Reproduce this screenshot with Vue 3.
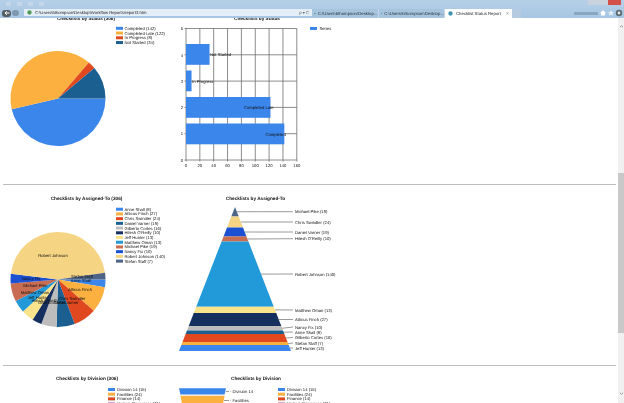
<script setup>
const C = {
  blue: '#3b86ea', orange: '#fbb040', red: '#e0481f', teal: '#1a5f8f', gray: '#bdbdbd', navy: '#15305f',
  pale: '#fbe38c', sky: '#2299d8', brick: '#c86c52', royal: '#1b50d2', sand: '#f5d484', slate: '#4d6487'
}
const sector = (cx, cy, r, a, b) => {
  const p = d => [cx + r * Math.cos(d * Math.PI / 180), cy + r * Math.sin(d * Math.PI / 180)].map(n => n.toFixed(2)).join(' ')
  return `M${cx} ${cy}L${p(a)}A${r} ${r} 0 ${b - a > 180 ? 1 : 0} 1 ${p(b)}Z`
}
const pie = (cx, cy, r, rows) => {
  const total = rows.reduce((s, x) => s + x.v, 0)
  let a = 0
  return rows.map(x => {
    const b = a + x.v / total * 360
    const d = sector(cx, cy, r, a, b)
    a = b
    return { d, c: x.c }
  })
}
const statusRows = [
  { n: 'Completed', v: 142, c: C.blue }, { n: 'Completed Late', v: 122, c: C.orange },
  { n: 'In Progress', v: 8, c: C.red }, { n: 'Not Started', v: 34, c: C.teal }
]
const statusPie = pie(58, 98.5, 47.5, statusRows)
const statusLegend = statusRows.map((r, i) => ({ t: `${r.n} (${r.v})`, c: r.c, y: 28.3 + i * 4.75 }))

const xTicks = [0, 20, 40, 60, 80, 100, 120, 140, 160].map(v => ({ v, x: 186 + v * 0.6925 }))
const yTicks = [0, 1, 2, 3, 4, 5].map(v => ({ v, y: 160 - v * 26.3 }))
const bars = [
  { t: 'Not Started', v: 34, y: 44, lx: 210 },
  { t: 'In Progress', v: 8, y: 70.5, lx: 192 },
  { t: 'Completed Late', v: 122, y: 97, lx: 244 },
  { t: 'Completed', v: 142, y: 123.5, lx: 265.5 }
].map(b => ({ ...b, w: b.v * 0.6925 }))

const people = [
  { n: 'Anne Shall', v: 8, c: C.blue }, { n: 'Atticus Finch', v: 27, c: C.orange }, { n: 'Chris Swindler', v: 24, c: C.red },
  { n: 'Daniel Varner', v: 19, c: C.teal }, { n: 'Gilberto Cortes', v: 16, c: C.gray }, { n: "Hilesh O'Reilly", v: 10, c: C.navy },
  { n: 'Jeff Hunter', v: 13, c: C.pale }, { n: 'Matthew Oman', v: 13, c: C.sky }, { n: 'Michael Pike', v: 19, c: C.brick },
  { n: 'Nancy Fix', v: 10, c: C.royal }, { n: 'Robert Johnson', v: 140, c: C.sand }, { n: 'Stefan Staff', v: 7, c: C.slate }
]
const peoplePie = pie(58, 279.5, 47.5, people)
const peopleLegend = people.map((r, i) => ({ t: `${r.n} (${r.v})`, c: r.c, y: 209.2 + i * 4.72 }))
const pieLabels = [
  ['Robert Johnson', 53, 257], ['Stefan Staff', 82, 278], ['Anne Shall', 81, 282], ['Atticus Finch', 80, 290.5],
  ['Chris Swindler', 72, 300], ['Daniel Varner', 66, 303.5], ['Nancy Fix', 31, 280], ['Michael Pike', 35, 286.5],
  ['Matthew Oman', 35, 294], ['Jeff Hunter', 38, 298.5], ['Hilesh O\'Reilly', 45, 301.5], ['Gilberto Cortes', 52, 303.5]
].map(([t, x, y]) => ({ t, x, y }))

const hw = y => 56 * (y - 207) / 144
const funnelSegs = [
  [207, 216.5, C.slate, 'Michael Pike (19)', 211.7], [216.5, 227.5, C.sand, 'Chris Swindler (24)', 222],
  [227.5, 236.5, C.royal, 'Daniel Varner (19)', 232], [236.5, 241.5, C.brick, "Hilesh O'Reilly (10)", 238.7],
  [241.5, 306.7, C.sky, 'Robert Johnson (140)', 274], [306.7, 313, C.pale, 'Matthew Oman (13)', 310],
  [313, 326, C.navy, 'Atticus Finch (27)', 319.5], [326, 330.5, C.gray, 'Nancy Fix (10)', 327],
  [330.5, 334, C.teal, 'Anne Shall (8)', 332], [334, 342, C.red, 'Gilberto Cortes (16)', 337.5],
  [342, 345, C.orange, 'Stefan Staff (7)', 343], [345, 351, C.blue, 'Jeff Hunter (13)', 348]
].map(([a, b, c, t, ly]) => {
  const mid = (a + b) / 2
  return {
    c, t, ly,
    pts: `${235 - hw(a)},${a} ${235 + hw(a)},${a} ${235 + hw(b)},${b} ${235 - hw(b)},${b}`,
    lx: 235 + hw(mid),
    my: mid
  }
})

const divisionLegend = [
  { t: 'Division 14 (15)', c: C.blue }, { t: 'Facilities (24)', c: C.orange },
  { t: 'Finance (14)', c: C.red }, { t: 'Human Resources (21)', c: '#c9a0c8' }
]
const divLegendA = divisionLegend.map((r, i) => ({ ...r, y: 389.5 + i * 4.7 }))
const divSegs = [
  { pts: '179,388.3 226,388.3 224.6,394.5 180.4,394.5', c: C.blue, t: 'Division 14', y: 391.5, x: 226 },
  { pts: '180.4,395.8 224.6,395.8 223,404 182,404', c: C.orange, t: 'Facilities', y: 400.5, x: 224 }
]
const tabs = ['C:\\Users\\bthompson\\Desktop...', 'C:\\Users\\bthompson\\Desktop...']
</script>

<template>
  <div class="window">
    <header class="chrome">
      <div class="topbar">
        <div class="faint-icons"><i></i><i></i><i></i><i></i></div>
        <div class="caps"><i class="cap"></i><i class="cap"></i><i class="cap close"></i></div>
      </div>
      <div class="toolbar">
        <div class="nav">
          <span class="back">
            <svg viewBox="0 0 8 8" width="8" height="8"><path d="M6.5 4H2M3.8 2.2 2 4l1.8 1.8" fill="none" stroke="#fff" stroke-width="1"/></svg>
          </span>
          <span class="fwd"></span>
        </div>
        <div class="address">
          <svg class="ie" viewBox="0 0 6 6" width="5" height="5"><circle cx="3" cy="3" r="2.6" fill="#4f9a5a"/></svg>
          <span class="url">C:\Users\bthompson\Desktop\Workflow Reports\report3.htm</span>
          <span class="search">ρ ▾ Ċ</span>
        </div>
        <div v-for="(t, i) in tabs" :key="i" class="tab">
          <svg viewBox="0 0 6 6" width="5" height="5"><circle cx="3" cy="3" r="2.6" fill="#4f9a8a"/></svg>
          <span>{{ t }}</span>
        </div>
        <div class="tab active">
          <svg viewBox="0 0 6 6" width="5" height="5"><circle cx="3" cy="3" r="2.6" fill="#3d94b0"/></svg>
          <span class="tab-title">Checklist Status Report</span>
          <span class="tab-x">×</span>
        </div>
        <div class="newtab"></div>
        <div class="tools">
          <i class="blur-name"></i>
          <svg viewBox="0 0 24 8" width="24" height="8">
            <path d="M1 4 4 1.2 7 4M2 4v2.6h4V4" fill="#fff"/>
            <path d="m12 1 .9 2 2.1.2-1.6 1.4.5 2.1-1.9-1.1-1.9 1.1.5-2.1L9 3.200l2.100-.2z" fill="#e8f0f6"/>
            <circle cx="20" cy="4" r="3.200" fill="#5a6a70"/><circle cx="20" cy="4" r="1.400" fill="#dfe8ee"/>
          </svg>
        </div>
      </div>
    </header>

    <div class="page">
      <main class="report">
        <section class="row first">
          <svg class="pane left" viewBox="0 18 170 166">
            <text class="title" x="86" y="19.500" text-anchor="middle">Checklists by Status (306)</text>
            <path v-for="(s, i) in statusPie" :key="i" :d="s.d" :fill="s.c" />
            <g v-for="l in statusLegend" :key="l.t">
              <rect x="116" :y="l.y - 1.500" width="7" height="3" :fill="l.c" />
              <text class="small" x="124.500" :y="l.y + 1.500">{{ l.t }}</text>
            </g>
          </svg>
          <svg class="pane right" viewBox="170 18 448 166">
            <text class="title" x="257" y="19.500" text-anchor="middle">Checklists by Status</text>
            <line v-for="t in xTicks" :key="'x' + t.v" :x1="t.x" y1="28.300" :x2="t.x" y2="161.500" class="grid" />
            <line v-for="t in yTicks" :key="'y' + t.v" x1="184.500" :y1="t.y" x2="296.800" :y2="t.y" class="grid" />
            <text v-for="t in xTicks" :key="'xl' + t.v" class="small" :x="t.x" y="166.500" text-anchor="middle">{{ t.v }}</text>
            <text v-for="t in yTicks" :key="'yl' + t.v" class="small" x="183" :y="t.y + 1.700" text-anchor="end">{{ t.v }}</text>
            <g v-for="b in bars" :key="b.t">
              <rect x="186" :y="b.y" :width="b.w" height="20.800" fill="#3b86ea" />
              <text class="small" :x="b.lx" :y="b.y + 12">{{ b.t }}</text>
            </g>
            <rect x="310" y="27" width="7" height="3" fill="#3b86ea" />
            <text class="small" x="319.500" y="30">Series</text>
          </svg>
        </section>
        <hr class="rule" />
        <section class="row second">
          <svg class="pane left" viewBox="0 185 170 180">
            <text class="title" x="86.500" y="199.500" text-anchor="middle">Checklists by Assigned-To (306)</text>
            <path v-for="(s, i) in peoplePie" :key="i" :d="s.d" :fill="s.c" />
            <text v-for="l in pieLabels" :key="l.t" class="small" :x="l.x" :y="l.y" text-anchor="middle">{{ l.t }}</text>
            <g v-for="l in peopleLegend" :key="l.t">
              <rect x="116" :y="l.y - 1.500" width="7" height="3" :fill="l.c" />
              <text class="small" x="124.500" :y="l.y + 1.500">{{ l.t }}</text>
            </g>
          </svg>
          <svg class="pane right" viewBox="170 185 448 180">
            <text class="title" x="255.500" y="199.500" text-anchor="middle">Checklists by Assigned-To</text>
            <polygon v-for="s in funnelSegs" :key="s.t" :points="s.pts" :fill="s.c" />
            <g v-for="s in funnelSegs" :key="'l' + s.t">
              <polyline :points="`${s.lx},${s.my} 293,${s.ly}`" class="leader" />
              <text class="small" x="295" :y="s.ly + 1.500">{{ s.t }}</text>
            </g>
          </svg>
        </section>
        <hr class="rule" />
        <section class="row third">
          <svg class="pane left" viewBox="0 366 170 37">
            <text class="title" x="87" y="380" text-anchor="middle">Checklists by Division (306)</text>
            <g v-for="l in divLegendA" :key="l.t">
              <rect x="108" :y="l.y - 1.500" width="7" height="3" :fill="l.c" />
              <text class="small" x="117" :y="l.y + 1.500">{{ l.t }}</text>
            </g>
          </svg>
          <svg class="pane right" viewBox="170 366 448 37">
            <text class="title" x="256" y="380" text-anchor="middle">Checklists by Division</text>
            <g v-for="s in divSegs" :key="s.t">
              <polygon :points="s.pts" :fill="s.c" />
              <line :x1="s.x" :y1="s.y" x2="229" :y2="s.y" class="leader" />
              <text class="small" x="230" :y="s.y + 1.500">- {{ s.t }}</text>
            </g>
            <g v-for="l in divLegendA" :key="'b' + l.t">
              <rect x="278" :y="l.y - 1.500" width="7" height="3" :fill="l.c" />
              <text class="small" x="287" :y="l.y + 1.500">{{ l.t }}</text>
            </g>
          </svg>
        </section>
      </main>
      <aside class="scrollbar">
        <svg class="arrow up" viewBox="0 0 6 4" width="5" height="3"><path d="M.8 3 3 1l2.200 2" fill="none" stroke="#666" stroke-width=".8"/></svg>
        <div class="thumb"></div>
        <svg class="arrow down" viewBox="0 0 6 4" width="5" height="3"><path d="M.8 1 3 3l2.200-2" fill="none" stroke="#666" stroke-width=".8"/></svg>
      </aside>
    </div>
  </div>
</template>

<style scoped>
.window {
  width: 624px;
  height: 403px;
  overflow: hidden;
  display: flex;
  flex-direction: column;
  background: #fff;
  font-family: "Liberation Sans", Arial, sans-serif;
  text-rendering: geometricPrecision;
  filter: blur(0.35px);
}
.chrome {
  height: 18px;
  flex: none;
  display: flex;
  flex-direction: column;
  background: linear-gradient(#b6cfe8, #a6c6e3);
}
.topbar {
  height: 8px;
  display: flex;
  justify-content: space-between;
  padding-left: 6px;
}
.faint-icons { display: flex; gap: 6px; padding-top: 2px; }
.faint-icons i { width: 5px; height: 4px; background: #c4d7ea; }
.caps { display: flex; padding-right: 3px; }
.cap { width: 10px; height: 5px; background: #c9d3de; }
.cap.close { width: 13px; background: #d2524a; }
.toolbar {
  flex: 1;
  display: flex;
  align-items: stretch;
}
.nav { width: 24px; display: flex; align-items: center; padding-left: 2px; box-sizing: border-box; gap: 1px; }
.back {
  width: 9px; height: 7px; border-radius: 3px; background: #555f66;
  display: flex; align-items: center; justify-content: center;
}
.fwd { width: 7px; height: 6px; border-radius: 3px; background: #7f98ad; }
.address {
  width: 288px;
  height: 7px;
  margin-top: 1px;
  background: #e4eef7;
  display: flex;
  align-items: center;
  gap: 2px;
  padding: 0 3px;
  box-sizing: border-box;
  font-size: 4.2px;
  color: #222;
}
.ie { flex: none; }
.url { white-space: nowrap; flex: 1; padding-left: 1px; }
.search { color: #555; white-space: nowrap; }
.tab {
  width: 66.500px;
  margin-top: 1px;
  display: flex;
  align-items: center;
  gap: 2px;
  padding-left: 2px;
  box-sizing: border-box;
  background: #a6c4de;
  border-right: 1px solid #c2d6e8;
  font-size: 4.3px;
  color: #26323c;
  white-space: nowrap;
  overflow: hidden;
}
.tab.active { background: #fff; width: 67px; color: #222; border: 0; padding-right: 3px; gap: 3px; padding-left: 3px; }
.tab-title { flex: 1; }
.tab-x { color: #777; font-size: 5px; }
.newtab { width: 9px; margin-top: 1px; background: #b4cbe0; }
.tools {
  flex: 1;
  display: flex;
  align-items: center;
  justify-content: flex-end;
  gap: 1px;
  padding-right: 1px;
}
.blur-name { width: 24px; height: 3px; background: #8ba6be; }
.page { flex: 1; display: flex; min-height: 0; }
.report { width: 618px; flex: none; overflow: hidden; }
.row { display: flex; }
.row.first { height: 166px; }
.row.second { height: 180px; }
.row.third { height: 37px; }
.pane { display: block; height: 100%; overflow: hidden; }
.pane.left { width: 170px; }
.pane.right { width: 448px; }
.rule {
  height: 1px;
  border: 0;
  margin: 0 2px 0 3px;
  background: #bdbdbd;
}
.title { font-size: 4.7px; font-weight: 700; fill: #111; }
.small { font-size: 4.2px; fill: #111; }
.grid { stroke: #6f6f6f; stroke-width: 0.8; }
.leader { stroke: #808080; stroke-width: 0.8; fill: none; }
.scrollbar {
  flex: 1;
  background: #f1f1f1;
  display: flex;
  flex-direction: column;
  align-items: center;
}
.arrow { flex: none; }
.arrow.up { margin-top: 7px; }
.thumb { width: 100%; height: 160px; margin-top: 145px; background: #c9c9c9; }
.arrow.down { margin-top: 59px; }
</style>
